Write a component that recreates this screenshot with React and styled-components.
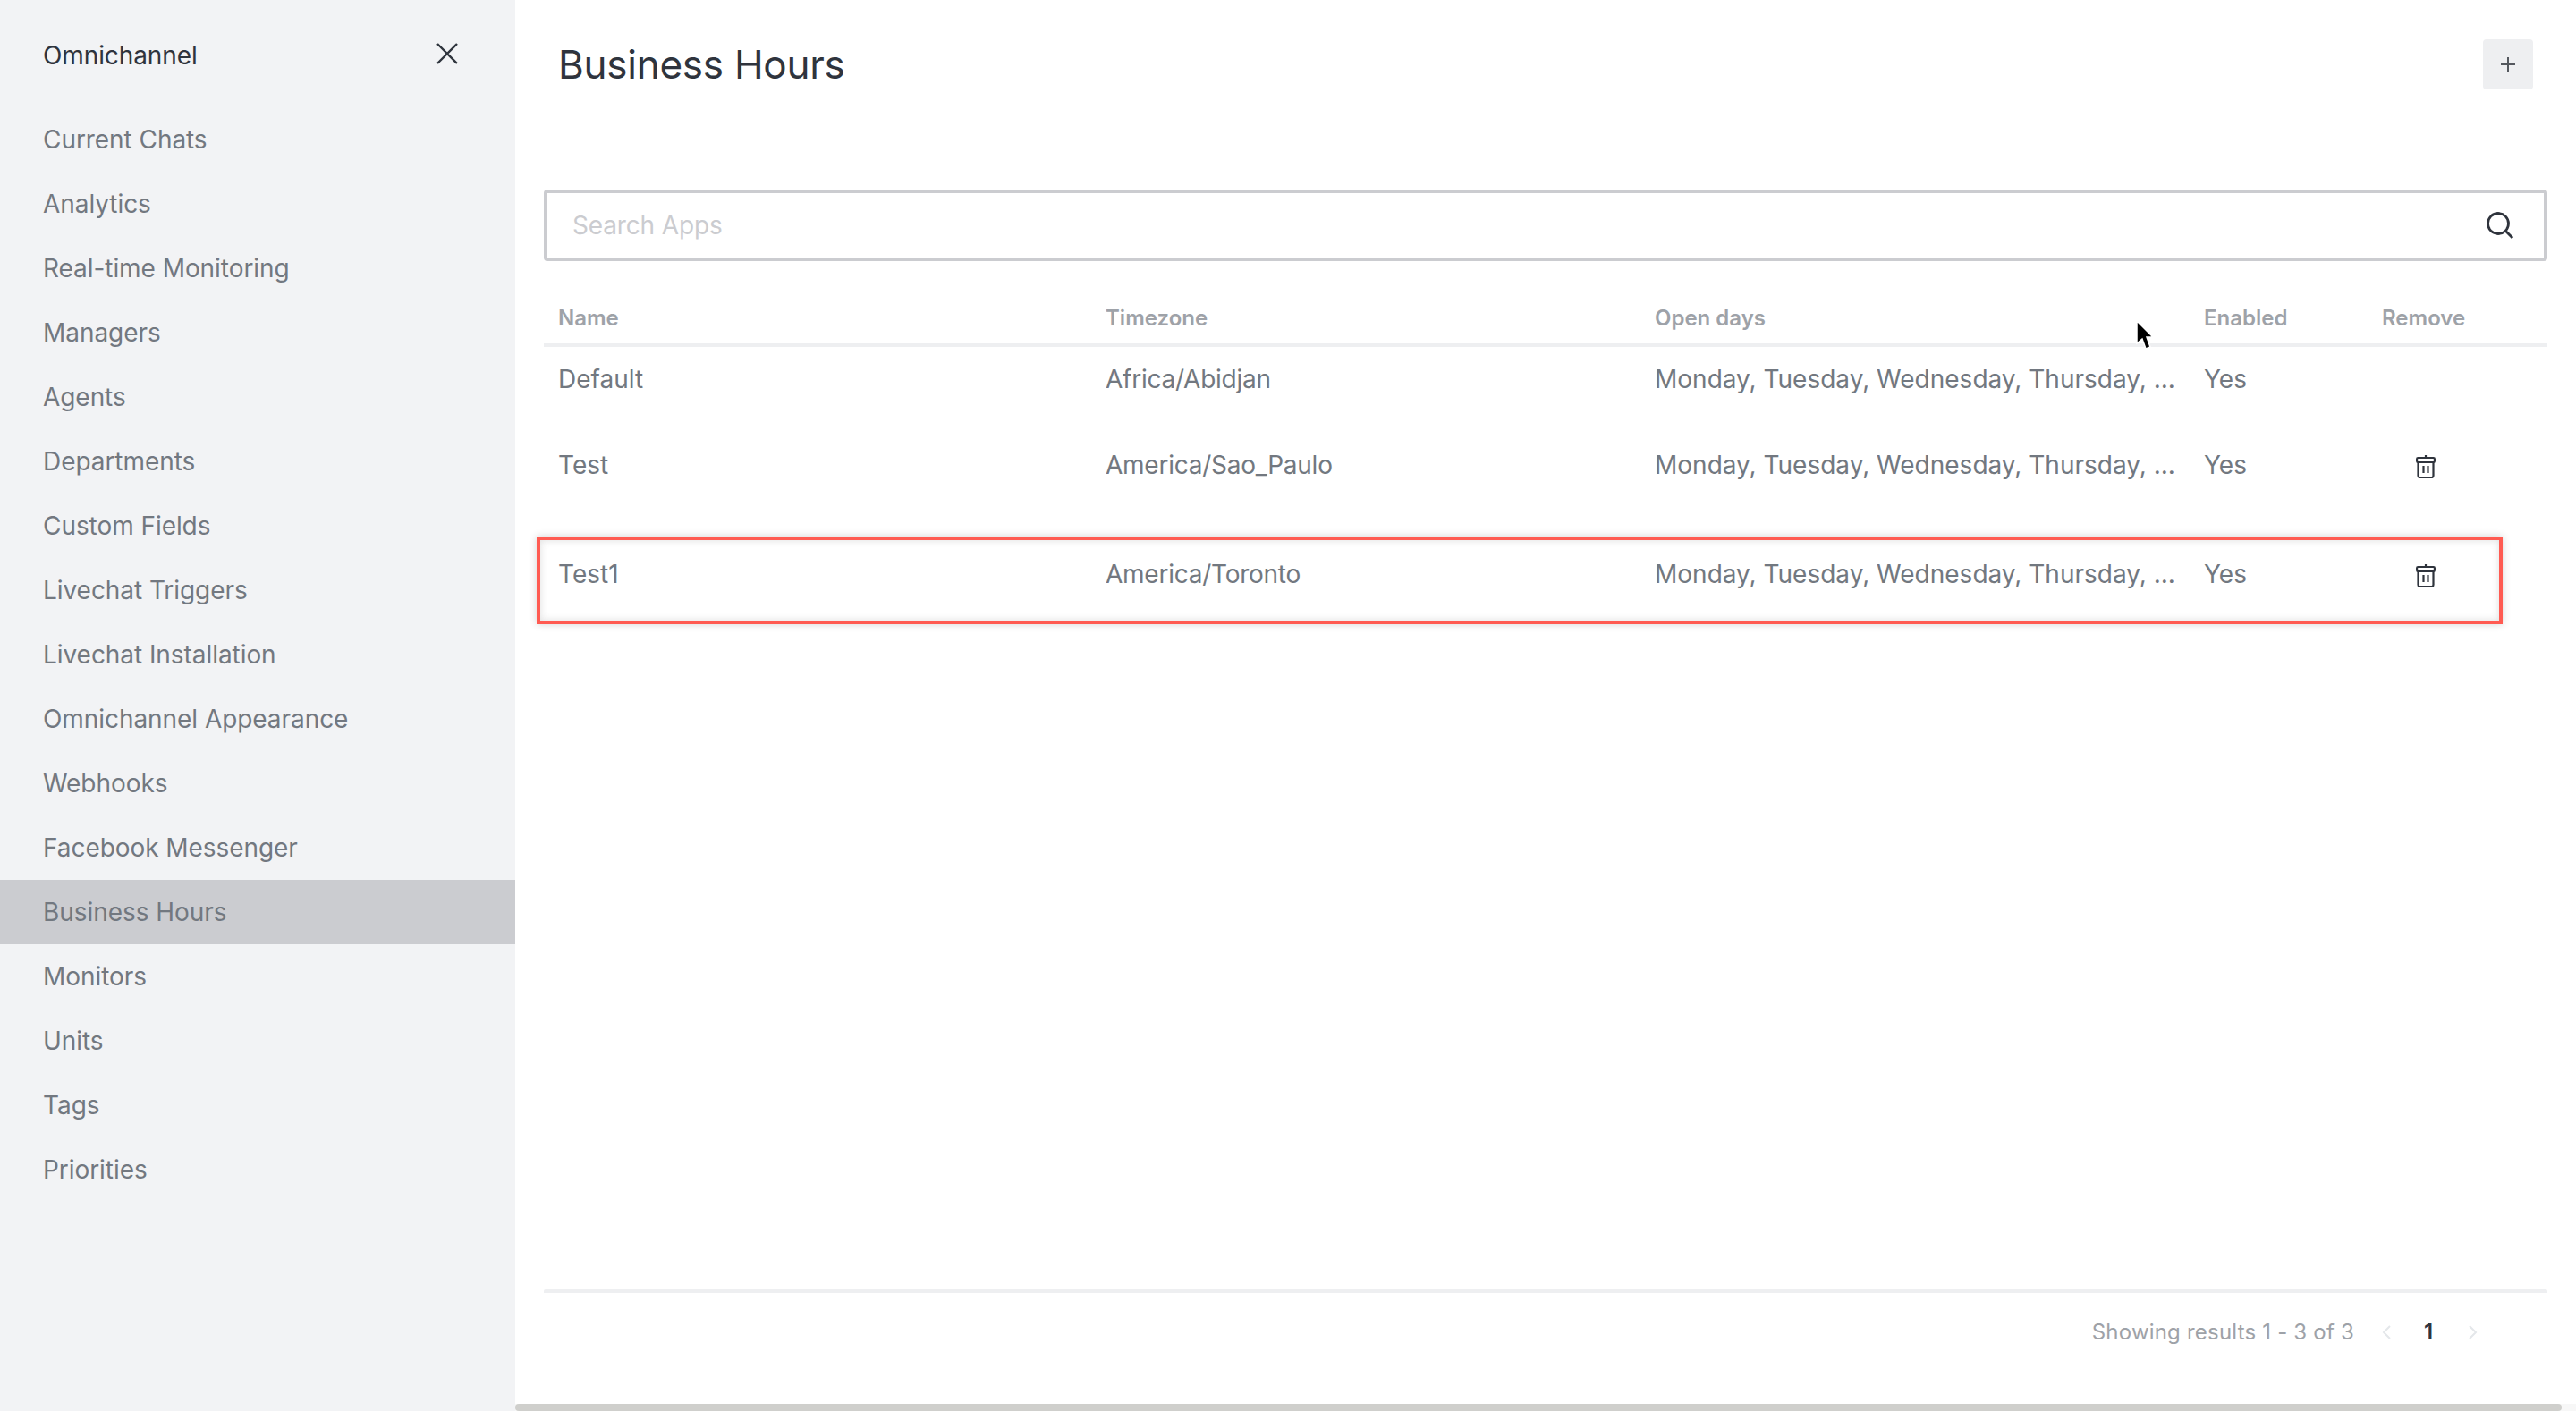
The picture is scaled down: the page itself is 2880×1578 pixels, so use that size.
import React from "react";
import styled, { createGlobalStyle } from "styled-components";

const GlobalStyle = createGlobalStyle`
  html, body {
    margin: 0;
    padding: 0;
    background: #fff;
    font-family: Inter, "Liberation Sans", sans-serif;
  }

  * {
    box-sizing: border-box;
  }
`;

const Page = styled.div`
  display: flex;
  width: 2880px;
  height: 1578px;
  overflow: hidden;
`;

const Sidebar = styled.aside`
  display: flex;
  flex-direction: column;
  flex: 0 0 576px;
  background: #f2f3f5;
`;

const SidebarHeader = styled.div`
  display: flex;
  align-items: center;
  justify-content: space-between;
  height: 120px;
  padding: 0 64px 0 48px;
`;

const SidebarTitle = styled.span`
  margin-top: 3px;
  font-size: 28px;
  line-height: 40px;
  letter-spacing: -0.1px;
  color: #2f343d;
`;

const NavItem = styled.div`
  height: 72px;
  padding-left: 48px;
  font-size: 28px;
  line-height: 72px;
  letter-spacing: -0.06px;
  color: #727880;
  background: ${(props) => (props.$active ? "#cbccd0" : "transparent")};
`;

const Main = styled.main`
  position: relative;
  display: flex;
  flex-direction: column;
  flex: 1;
  min-width: 0;
`;

const Content = styled.div`
  display: flex;
  flex-direction: column;
  flex: 1;
  padding: 0 32px;
`;

const Header = styled.header`
  display: flex;
  align-items: center;
  justify-content: space-between;
  height: 144px;
  padding: 0 16px;
`;

const Title = styled.h1`
  margin: 0;
  font-size: 44px;
  line-height: 56px;
  font-weight: 400;
  letter-spacing: -0.25px;
  color: #2f343d;
`;

const AddButton = styled.button`
  display: flex;
  align-items: center;
  justify-content: center;
  width: 56px;
  height: 56px;
  padding: 0;
  border: 0;
  border-radius: 4px;
  background: #eeeff1;
`;

const SearchBox = styled.div`
  display: flex;
  align-items: center;
  height: 80px;
  margin-top: 68px;
  padding: 0 34px 0 28px;
  border: 4px solid #cbccd0;
  border-radius: 4px;
`;

const SearchInput = styled.input`
  flex: 1;
  border: 0;
  outline: 0;
  padding: 0;
  font-family: inherit;
  font-size: 28px;
  letter-spacing: -0.15px;
  color: #2f343d;

  &::placeholder {
    color: #cbccd0;
    opacity: 1;
  }
`;

const Table = styled.div`
  flex: 1;
`;

const Row = styled.div`
  position: relative;
  display: grid;
  grid-template-columns: 612px 614px 614px 199px 201px;
  align-items: center;
  min-height: ${(props) => props.$height}px;
`;

const HeadRow = styled(Row)`
  align-items: start;
  padding-top: 48px;
  border-bottom: 4px solid #eeeff1;
`;

const HeadCell = styled.div`
  padding-left: 16px;
  font-size: 24px;
  line-height: 32px;
  font-weight: 600;
  color: #9ea2a8;
`;

const Cell = styled.div`
  padding-left: 16px;
  font-size: 28px;
  line-height: 40px;
  color: #727880;
  white-space: nowrap;
`;

const ZoneCell = styled(Cell)`
  letter-spacing: -0.25px;
`;

const IconCell = styled.div`
  display: flex;
  padding: 4px 0 0 54px;
`;

const Highlight = styled.div`
  position: absolute;
  top: 20px;
  left: -8px;
  right: 50px;
  height: 98px;
  border: 4px solid #ff5b52;
  box-shadow: 0 0 8px rgba(70, 70, 70, 0.24), inset 0 0 8px rgba(70, 70, 70, 0.18);
  pointer-events: none;
`;

const Footer = styled.footer`
  display: flex;
  align-items: flex-start;
  justify-content: flex-end;
  height: 128px;
  padding: 28px 78px 0 0;
  border-top: 4px solid #eeeff1;
  border-radius: 2px;
`;

const Results = styled.span`
  font-size: 24px;
  line-height: 32px;
  letter-spacing: 0.2px;
  color: #9ea2a8;
`;

const Pager = styled.div`
  display: flex;
  align-items: center;
  margin-left: 31px;
`;

const PageNumber = styled.span`
  width: 11px;
  margin: 0 39px 0 37px;
  font-size: 24px;
  line-height: 32px;
  font-weight: 600;
  color: #2f343d;
`;

const Scrollbar = styled.div`
  display: flex;
  flex: 0 0 8px;
  background: #f7f7f7;
`;

const ScrollThumb = styled.div`
  width: 2288px;
  border-radius: 4px;
  background: #cfcfcc;
`;

const Cursor = styled.svg`
  position: absolute;
  left: 1811px;
  top: 357px;
`;

const CloseIcon = () => (
  <svg width="24" height="24" viewBox="0 0 24 24" fill="none" stroke="#2f343d" strokeWidth="2.4">
    <path d="M1 1l22 22M23 1L1 23" />
  </svg>
);

const PlusIcon = () => (
  <svg width="16" height="16" viewBox="0 0 16 16" fill="none" stroke="#54585e" strokeWidth="2">
    <path d="M8 0v16M0 8h16" />
  </svg>
);

const SearchIcon = () => (
  <svg width="30" height="30" viewBox="0 0 30 30" fill="none" stroke="#2f343d" strokeWidth="2.8">
    <circle cx="13" cy="13" r="11.5" />
    <path d="M21.5 21.5l7.6 7.6" />
  </svg>
);

const TrashIcon = () => (
  <svg width="22" height="26" viewBox="0 0 22 26" fill="none" stroke="#2f343d" strokeWidth="2.2">
    <path d="M11 0v2" />
    <rect x="1.1" y="3" width="19.8" height="5" rx="1.2" />
    <path d="M2.5 8v15a2 2 0 0 0 2 2h13a2 2 0 0 0 2-2V8" />
    <path d="M8.5 12v8M13.5 12v8" />
  </svg>
);

const Chevron = ({ left }) => (
  <svg width="10" height="16" viewBox="0 0 10 16" fill="none" stroke="#e4e7ea" strokeWidth="2">
    <path d={left ? "M9 1L2 8l7 7" : "M1 1l7 7-7 7"} />
  </svg>
);

const navItems = [
  "Current Chats",
  "Analytics",
  "Real-time Monitoring",
  "Managers",
  "Agents",
  "Departments",
  "Custom Fields",
  "Livechat Triggers",
  "Livechat Installation",
  "Omnichannel Appearance",
  "Webhooks",
  "Facebook Messenger",
  "Business Hours",
  "Monitors",
  "Units",
  "Tags",
  "Priorities",
];

const columns = ["Name", "Timezone", "Open days", "Enabled", "Remove"];
const openDays = "Monday, Tuesday, Wednesday, Thursday, ...";

const rows = [
  { name: "Default", zone: "Africa/Abidjan", height: 72 },
  { name: "Test", zone: "America/Sao_Paulo", height: 120, removable: true },
  { name: "Test1", zone: "America/Toronto", height: 124, removable: true, marked: true },
];

export default function App() {
  return (
    <Page>
      <GlobalStyle />
      <Sidebar>
        <SidebarHeader>
          <SidebarTitle>Omnichannel</SidebarTitle>
          <CloseIcon />
        </SidebarHeader>
        {navItems.map((item) => (
          <NavItem key={item} $active={item === "Business Hours"}>
            {item}
          </NavItem>
        ))}
      </Sidebar>
      <Main>
        <Content>
          <Header>
            <Title>Business Hours</Title>
            <AddButton aria-label="Add">
              <PlusIcon />
            </AddButton>
          </Header>
          <SearchBox>
            <SearchInput placeholder="Search Apps" />
            <SearchIcon />
          </SearchBox>
          <Table>
            <HeadRow $height={96}>
              {columns.map((column) => (
                <HeadCell key={column}>{column}</HeadCell>
              ))}
            </HeadRow>
            {rows.map((row) => (
              <Row key={row.name} $height={row.height}>
                <Cell>{row.name}</Cell>
                <ZoneCell>{row.zone}</ZoneCell>
                <Cell>{openDays}</Cell>
                <Cell>Yes</Cell>
                {row.removable && (
                  <IconCell>
                    <TrashIcon />
                  </IconCell>
                )}
                {row.marked && <Highlight />}
              </Row>
            ))}
          </Table>
          <Footer>
            <Results>Showing results 1 - 3 of 3</Results>
            <Pager>
              <Chevron left />
              <PageNumber>1</PageNumber>
              <Chevron />
            </Pager>
          </Footer>
        </Content>
        <Scrollbar>
          <ScrollThumb />
        </Scrollbar>
        <Cursor width="20" height="36" viewBox="0 0 20 36">
          <path d="M2 2v25l6-5 4 11 5-2-4-11h7z" fill="#000" stroke="#fff" strokeWidth="1.5" />
        </Cursor>
      </Main>
    </Page>
  );
}
